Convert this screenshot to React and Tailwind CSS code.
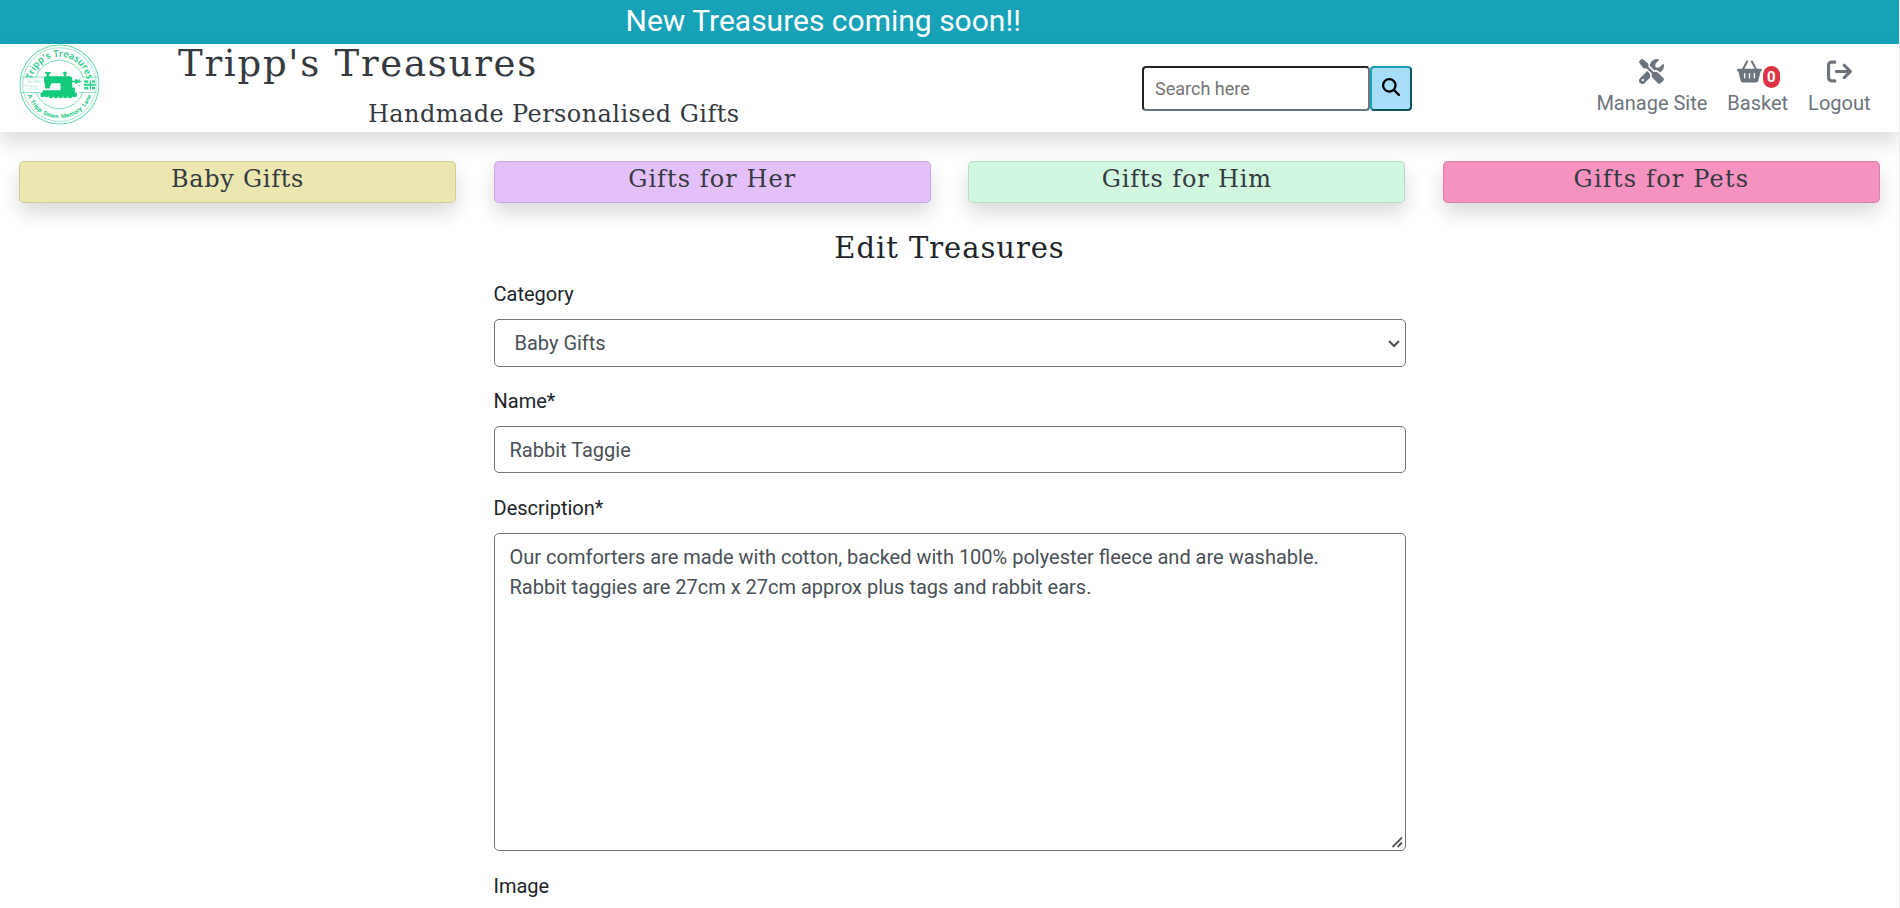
import React from "react";
import {
  FaScrewdriverWrench,
  FaBasketShopping,
  FaArrowRightFromBracket,
  FaMagnifyingGlass,
} from "react-icons/fa6";

const categories = [
  { name: "Baby Gifts", tone: "bg-[#ece6b0] tracking-[0.7px]" },
  { name: "Gifts for Her", tone: "bg-[#e4c0fb] tracking-[1.05px]" },
  { name: "Gifts for Him", tone: "bg-[#d2f7e1] tracking-[0.85px]" },
  { name: "Gifts for Pets", tone: "bg-[#f692c0] tracking-[1.2px]" },
];

const typewriter = "font-['DejaVu_Serif',serif]";

function Logo() {
  return (
    <svg viewBox="0 0 242 242" className="h-[81px] w-[81px]" fill="none" stroke="#17c97f">
      <defs>
        <path id="arc-top" d="M38 121a83 83 0 0 1 166 0" />
        <path id="arc-bottom" d="M20 121a101 101 0 0 0 202 0" />
      </defs>
      <circle cx="121" cy="121" r="118" strokeWidth="3" opacity=".65" />
      <circle cx="121" cy="121" r="110" strokeWidth="2" opacity=".6" />
      <path d="M50 99a75 75 0 0 1 142 0M50 143a75 75 0 0 0 142 0" strokeWidth="2.5" opacity=".7" />
      <path d="M8 99h68M8 145h55M187 99h48M180 145h54" strokeWidth="2" opacity=".7" />
      <g fill="#17c97f" stroke="none" className="font-['Open_Sans',sans-serif]">
        <text fontSize="28" fontWeight="600">
          <textPath href="#arc-top" startOffset="50%" textAnchor="middle">Tripp's Treasures</textPath>
        </text>
        <text fontSize="17" fontWeight="700" wordSpacing="4">
          <textPath href="#arc-bottom" startOffset="50%" textAnchor="middle">A Tripp Down Memory Lane</textPath>
        </text>
        <text x="26" y="116" fontSize="9" opacity=".6">Est. 2020</text>
        <text x="14" y="127" fontSize="8" opacity=".45">Handmade</text>
        <text x="22" y="137" fontSize="8" opacity=".45">in the UK</text>
      </g>
      <g fill="#12cb7d" stroke="none">
        <path d="M78 84h17v5h-5v7h45v-5h-3v-8h10v8h-2v5h13l6 5v9h9v-5h6v4l9-1v7h-9v4h-6v-5h-9v16h8v15h5v11H65v-11h6v-7h53v-21H97l-6 16H79l-4-22V99l8-5V89h-5z" />
        <path d="M65 146h107v9a7 7 0 0 1-13 0 7 7 0 0 1-14 0 7 7 0 0 1-14 0 7 7 0 0 1-14 0 7 7 0 0 1-14 0 7 7 0 0 1-14 0 7 7 0 0 1-13 0 6 6 0 0 1-11 0z" />
        <path d="M195 108h12v8h-12zM211 108h4v28h-4zM218 108h9v8h-9zM195 128h12v8h-12zM218 128h9v8h-9zM193 119h36v6h-36z" opacity=".85" />
      </g>
      <path d="M177 108l5-5M180 115l7-4M177 121l5 5" strokeWidth="2.5" />
    </svg>
  );
}

function NavLink({ icon, label, className }) {
  return (
    <a href="#" className={"flex flex-col items-center text-[#6c757d] " + className}>
      <span className="relative flex h-[25px] items-center text-[25px]">{icon}</span>
      <span className="mt-[4px] text-[20px] leading-[30px] whitespace-nowrap">{label}</span>
    </a>
  );
}

export default function App() {
  return (
    <div className="flex h-[908px] w-full overflow-hidden bg-white font-[Roboto,sans-serif] text-[20px] leading-[30px] text-[#212529]">
      <div className="min-w-0 flex-1">
        <div className="flex h-[44px] items-center bg-[#17a2b8] pb-[3px] pl-[625.5px] text-[30px] text-white">
          New Treasures coming soon!!
        </div>

        <header className="flex h-[88px] bg-white pl-[19px] shadow-[0_10px_20px_rgba(0,0,0,0.15)]">
          <div className="w-[159px]">
            <Logo />
          </div>
          <div className={"w-[569px] text-[#343a40] " + typewriter}>
            <h1 className="h-[51px] text-[37px] leading-[40px] tracking-[1.75px] whitespace-nowrap">
              <span>Tripp's Treasures</span>
            </h1>
            <p className="pl-[190px] text-[24px] leading-[38px] tracking-[0.42px] whitespace-nowrap">
              <span>Handmade Personalised Gifts</span>
            </p>
          </div>
          <form className="ml-[395px] flex pt-[22px]">
            <input
              placeholder="Search here"
              className="h-[45px] w-[228px] rounded-[4px] border-2 border-t-[#212529] border-r-[#6c757d] border-b-[#6c757d] border-l-[#212529] px-[11px] text-[18px] placeholder:text-[#757575]"
            />
            <button
              type="button"
              className="flex h-[45px] w-[42px] items-center justify-center rounded-[4px] border-2 border-t-[#17a2b8] border-r-[#0c5663] border-b-[#0c5663] border-l-[#17a2b8] bg-[#a8ddf8] pb-[3px] text-black"
            >
              <FaMagnifyingGlass size={18} />
            </button>
          </form>
          <nav className="ml-auto flex pt-[15px] pr-[28.5px]">
            <NavLink icon={<FaScrewdriverWrench />} label="Manage Site" className="mr-[20px]" />
            <NavLink
              icon={
                <>
                  <FaBasketShopping className="mr-[17px]" />
                  <span className="absolute top-[7px] -right-px flex h-[22px] w-[17px] items-center justify-center rounded-full bg-[#dc3545] text-[15px] leading-none font-bold text-white">
                    0
                  </span>
                </>
              }
              label="Basket"
              className="mr-[20px]"
            />
            <NavLink icon={<FaArrowRightFromBracket />} label="Logout" className="" />
          </nav>
        </header>

        <div className="mt-[29px] grid grid-cols-4 gap-[37.6px] px-[19px]">
          {categories.map((c) => (
            <a
              key={c.name}
              href="#"
              className={
                "flex h-[42px] justify-center rounded-[5px] border border-black/12 text-[24px] leading-[35px] text-[#343a40] shadow-[0_10px_20px_rgba(0,0,0,0.15)] " +
                typewriter + " " + c.tone
              }
            >
              <span>{c.name}</span>
            </a>
          ))}
        </div>

        <main className="mx-auto w-[912px]">
          <h2 className={"mt-[27px] h-[49px] text-center text-[29px] leading-[36px] tracking-[0.95px] " + typewriter}>
            <span>Edit Treasures</span>
          </h2>
          <label className="block h-[40px]">Category</label>
          <div className="relative">
            <select className="block h-[48px] w-full appearance-none rounded-[5px] border border-[#6c757d] bg-white px-[20px] text-[#495057]">
              <option>Baby Gifts</option>
            </select>
            <svg
              viewBox="0 0 12 8"
              className="pointer-events-none absolute top-[21px] right-[6px] h-[8px] w-[12px]"
              fill="none"
              stroke="#495057"
              strokeWidth="2"
            >
              <path d="M1 1l5 5 5-5" />
            </svg>
          </div>
          <label className="mt-[19px] block h-[40px]">Name*</label>
          <input
            defaultValue="Rabbit Taggie"
            className="block h-[47px] w-full rounded-[5px] border border-[#6c757d] px-[15px] text-[#495057]"
          />
          <label className="mt-[20px] block h-[40px]">Description*</label>
          <div className="relative">
            <textarea
              className="block h-[318px] w-full resize-none rounded-[5px] border border-[#6c757d] px-[15px] py-[8px] text-[#495057]"
              defaultValue={
                "Our comforters are made with cotton, backed with 100% polyester fleece and are washable.\nRabbit taggies are 27cm x 27cm approx plus tags and rabbit ears."
              }
            />
            <svg
              viewBox="0 0 11 11"
              className="pointer-events-none absolute right-[3px] bottom-[3px] h-[11px] w-[11px]"
              stroke="#555"
              strokeWidth="1.8"
            >
              <path d="M0.5 10L10 0.5M5.5 10L10 5.5" />
            </svg>
          </div>
          <label className="mt-[20px] block">Image</label>
        </main>
      </div>
      <div className="w-px bg-[#ececec]" />
    </div>
  );
}
